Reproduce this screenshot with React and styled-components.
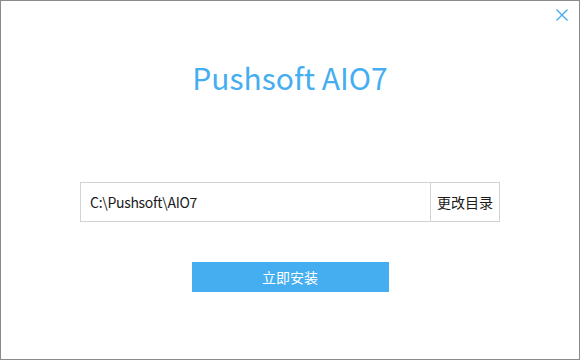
import React from "react";
import styled, { createGlobalStyle } from "styled-components";

const GlobalStyle = createGlobalStyle`
  html, body {
    margin: 0;
    padding: 0;
    background: #fff;
  }
  * {
    box-sizing: border-box;
  }
`;

const Window = styled.div`
  position: relative;
  width: 580px;
  height: 360px;
  background: #fff;
  border: 1px solid #8a8a8a;
  display: flex;
  flex-direction: column;
  align-items: center;
  font-family: "Noto Sans CJK SC", "Noto Sans", sans-serif;
`;

const CloseButton = styled.button`
  position: absolute;
  top: 7px;
  right: 10px;
  width: 14px;
  height: 14px;
  padding: 0;
  border: none;
  background: none;
  cursor: pointer;
  svg {
    display: block;
  }
`;

const Title = styled.h1`
  margin: 52px 0 0 0;
  height: 48px;
  font-size: 30px;
  font-weight: 400;
  line-height: 48px;
  color: #45aef0;
`;

const PathRow = styled.div`
  display: flex;
  width: 420px;
  height: 40px;
  margin-top: 81px;
  border: 1px solid #d3d3d3;
`;

const PathInput = styled.input`
  flex: 1;
  min-width: 0;
  border: none;
  outline: none;
  padding: 0 0 0 9px;
  font-family: "Noto Sans CJK SC", "Noto Sans", sans-serif;
  font-size: 14px;
  letter-spacing: -0.3px;
  color: #1a1a1a;
  background: transparent;
`;

const BrowseButton = styled.button`
  width: 69px;
  border: none;
  border-left: 1px solid #d3d3d3;
  background: #fff;
  padding: 0;
  font-family: "Noto Sans CJK SC", sans-serif;
  font-size: 14px;
  color: #1a1a1a;
  cursor: pointer;
`;

const InstallButton = styled.button`
  width: 197px;
  height: 30px;
  margin-top: 40px;
  border: none;
  background: #45aef0;
  color: #fff;
  font-family: "Noto Sans CJK SC", sans-serif;
  font-size: 14px;
  cursor: pointer;
`;

export default function App() {
  return (
    <>
      <GlobalStyle />
      <Window>
        <CloseButton aria-label="close">
          <svg width="14" height="14" viewBox="0 0 14 14">
            <path d="M1.5 1.5 L12.5 12.5 M12.5 1.5 L1.5 12.5" stroke="#45aef0" strokeWidth="1.4" />
          </svg>
        </CloseButton>
        <Title>Pushsoft AIO7</Title>
        <PathRow>
          <PathInput defaultValue="C:\Pushsoft\AIO7" />
          <BrowseButton>更改目录</BrowseButton>
        </PathRow>
        <InstallButton>立即安装</InstallButton>
      </Window>
    </>
  );
}
